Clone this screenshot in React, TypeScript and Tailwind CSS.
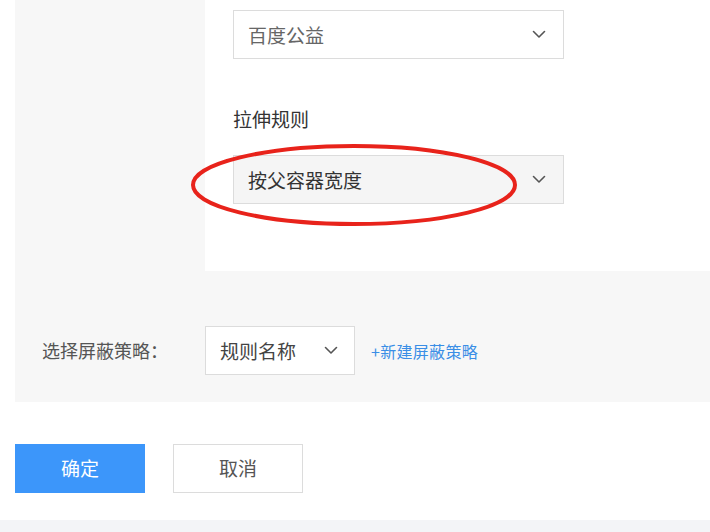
import React from 'react';

const font = { fontFamily: '"Noto Sans CJK SC", "Noto Sans", sans-serif' };

const Chevron = () => (
  <svg width="14" height="9" viewBox="0 0 14 9" fill="none" className="shrink-0">
    <path d="M1.5 1.5 7 7l5.5-5.5" stroke="#555" strokeWidth="1.6" strokeLinecap="round" strokeLinejoin="round" />
  </svg>
);

const Select = ({ value, className, textClass }: { value: string; className: string; textClass: string }) => (
  <div className={`flex items-center justify-between border border-[#dcdcdc] h-[49px] ${className}`}>
    <span className={`text-[19px] leading-none ${textClass}`}>{value}</span>
    <Chevron />
  </div>
);

export default function App() {
  return (
    <div className="relative w-[710px] h-[532px] bg-white flex flex-col overflow-hidden" style={font}>
      {/* grey form panel */}
      <div className="ml-[15px] h-[402px] bg-[#f7f7f7] flex flex-col">
        <div className="ml-[190px] h-[271px] bg-white pl-[28px] pt-[10px] flex flex-col">
          <Select value="百度公益" className="w-[331px] bg-white pl-[14px] pr-[17px]" textClass="text-[#666]" />
          <div className="mt-[48px] h-[24px] flex items-center text-[19px] text-[#333]">拉伸规则</div>
          <Select value="按父容器宽度" className="mt-[24px] w-[331px] bg-[#f5f5f5] pl-[14px] pr-[17px]" textClass="text-[#333]" />
        </div>

        <div className="mt-[55px] flex items-center pl-[27px]">
          <div className="w-[163px] text-[18px] text-[#555]">选择屏蔽策略：</div>
          <Select value="规则名称" className="w-[150px] bg-white pl-[14px] pr-[16px]" textClass="text-[#444]" />
          <a className="ml-[16px] text-[16px] tracking-[0.3px] text-[#3a8ee6] cursor-pointer">+新建屏蔽策略</a>
        </div>
      </div>

      {/* actions */}
      <div className="mt-[42px] ml-[15px] flex gap-[28px]">
        <button className="w-[130px] h-[49px] bg-[#3c96fa] text-white text-[19px]">确定</button>
        <button className="w-[130px] h-[49px] bg-white border border-[#dcdcdc] text-[#555] text-[19px]">取消</button>
      </div>

      <div className="mt-[27px] h-[12px] bg-[#f3f4f7]" />

      {/* red annotation */}
      <svg className="absolute left-[188px] top-[141px]" width="334" height="88" viewBox="0 0 334 88" fill="none">
        <ellipse cx="166" cy="44" rx="161" ry="39" stroke="#e8231b" strokeWidth="4" />
      </svg>
    </div>
  );
}
